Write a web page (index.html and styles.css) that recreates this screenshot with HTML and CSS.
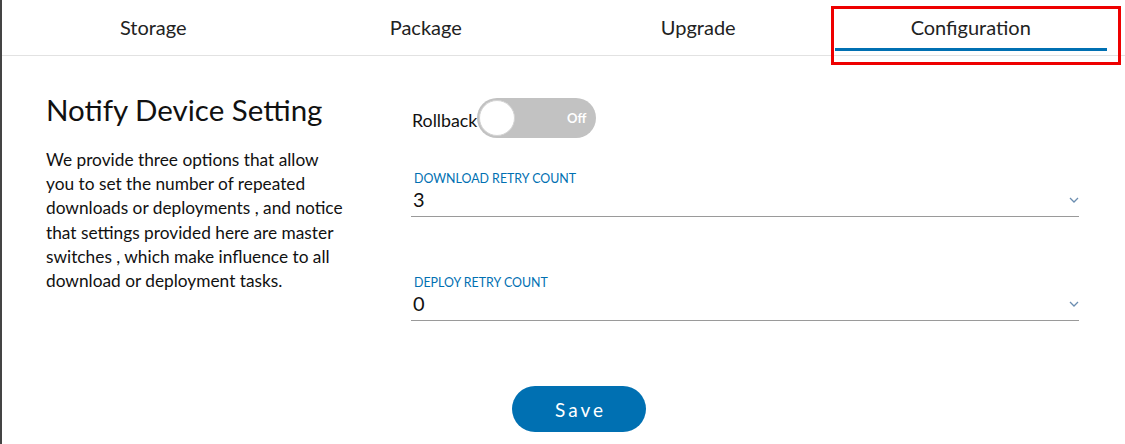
FILE: index.html
```html
<!DOCTYPE html>
<html>
<head>
<meta charset="utf-8">
<link rel="stylesheet" href="styles.css">
</head>
<body>
<div class="page">
  <nav class="tabs">
    <div class="tab">Storage</div>
    <div class="tab">Package</div>
    <div class="tab">Upgrade</div>
    <div class="tab active">Configuration</div>
  </nav>
  <div class="highlight"></div>
  <main class="content">
    <section class="intro">
      <h1>Notify Device Setting</h1>
      <p>We provide three options that allow you to set the number of repeated downloads or deployments , and notice that settings provided here are master switches , which make influence to all download or deployment tasks.</p>
    </section>
    <section class="form">
      <div class="toggle-row">
        <span class="toggle-label">Rollback</span>
        <div class="toggle"><span class="knob"></span><span class="toggle-text">Off</span></div>
      </div>
      <div class="field first">
        <div class="field-label">DOWNLOAD RETRY COUNT</div>
        <div class="field-value"><span>3</span>
          <svg class="chev" width="10" height="6" viewBox="0 0 10 6"><path d="M1 1 L5 5 L9 1" fill="none" stroke="#6b8db0" stroke-width="1.3"/></svg>
        </div>
      </div>
      <div class="field second">
        <div class="field-label">DEPLOY RETRY COUNT</div>
        <div class="field-value"><span>0</span>
          <svg class="chev" width="10" height="6" viewBox="0 0 10 6"><path d="M1 1 L5 5 L9 1" fill="none" stroke="#6b8db0" stroke-width="1.3"/></svg>
        </div>
      </div>
      <button class="save">Save</button>
    </section>
  </main>
</div>
</body>
</html>
```
FILE: styles.css
```css
* { box-sizing: border-box; }
html, body { margin: 0; padding: 0; background: #fff; }
body { font-family: Lato, "Noto Sans", sans-serif; color: #111; }
.page {
  position: relative;
  width: 1125px;
  height: 444px;
  border-left: 2px solid #444;
  overflow: hidden;
}
.tabs {
  display: flex;
  padding-left: 15px;
  padding-bottom: 4px;
  border-bottom: 1px solid #e2e2e2;
}
.tab {
  width: 272.5px;
  text-align: center;
  font-size: 20px;
  line-height: 22px;
  padding-top: 16px;
  padding-bottom: 10px;
  border-bottom: 3px solid transparent;
  color: #222;
}
.tab.active { border-bottom-color: #0070b2; }
.highlight {
  position: absolute;
  left: 829px;
  top: 6px;
  width: 290px;
  height: 59px;
  border: 3px solid #ee0000;
}
.content {
  display: flex;
  padding-top: 36px;
}
.intro {
  width: 409px;
  flex: none;
  padding-left: 44px;
}
.intro h1 {
  margin: 0;
  font-weight: 400;
  font-size: 29.5px;
  line-height: 36px;
  color: #111;
}
.intro p {
  margin: 20px 0 0;
  font-size: 17.3px;
  line-height: 24.2px;
  width: 300px;
}
.form {
  width: 668px;
  flex: none;
  padding-top: 6px;
}
.toggle-row {
  display: flex;
  align-items: center;
  height: 40px;
}
.toggle-label {
  font-size: 17.8px;
  margin-top: 3px;
  margin-left: 1px;
}
.toggle {
  position: relative;
  width: 119px;
  height: 40px;
  border-radius: 20px;
  background: #c2c2c2;
  display: flex;
  align-items: center;
  justify-content: space-between;
  padding: 0 10px 0 2px;
}
.knob {
  width: 36px;
  height: 36px;
  border-radius: 50%;
  background: #fff;
  border: 1px solid #d4d4d4;
}
.toggle-text {
  color: #fff;
  font-weight: 700;
  font-size: 13px;
}
.field {
  border-bottom: 1px solid #9a9a9a;
  padding-bottom: 5px;
}
.field.first { margin-top: 34px; }
.field.second { margin-top: 59px; }
.field-label {
  color: #0070b2;
  font-size: 12.4px;
  line-height: 14px;
  padding-left: 3px;
}
.field-value {
  display: flex;
  align-items: center;
  justify-content: space-between;
  margin-top: 1px;
  font-size: 20px;
  line-height: 24px;
  padding-left: 2px;
}
.chev { margin-top: 2px; }
.save {
  display: block;
  margin: 65px 0 0 101px;
  width: 134px;
  height: 46px;
  border: none;
  border-radius: 23px;
  background: #0070b2;
  color: #fff;
  font-family: Lato, "Noto Sans", sans-serif;
  font-size: 19px;
  letter-spacing: 3px;
  padding: 0 0 0 3px;
}
```
